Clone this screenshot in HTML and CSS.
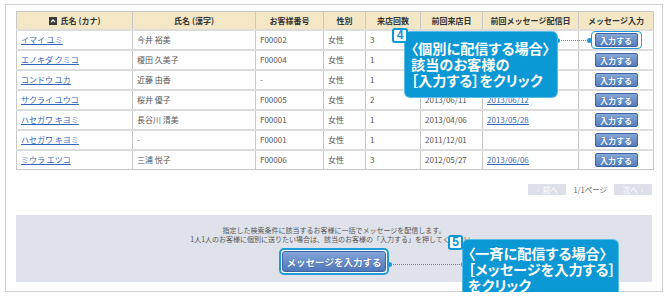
FILE: index.html
```html
<!DOCTYPE html>
<html lang="ja">
<head>
<meta charset="utf-8">
<link rel="stylesheet" href="styles.css">
</head>
<body>
<div class="frame">
  <table class="list">
    <colgroup>
      <col class="c1"><col class="c2"><col class="c3"><col class="c4"><col class="c5"><col class="c6"><col class="c7"><col class="c8">
    </colgroup>
    <thead>
      <tr>
        <th><svg class="sort" width="8" height="8" viewBox="0 0 8 8"><rect width="8" height="8" fill="#3a3a3a"/><path d="M2 5 L4 3 L6 5" fill="none" stroke="#fff" stroke-width="1.3"/></svg>氏名 (カナ)</th>
        <th>氏名 (漢字)</th>
        <th>お客様番号</th>
        <th>性別</th>
        <th>来店回数</th>
        <th>前回来店日</th>
        <th>前回メッセージ配信日</th>
        <th>メッセージ入力</th>
      </tr>
    </thead>
    <tbody>
      <tr><td><a href="#">イマイ ユミ</a></td><td>今井 裕美</td><td>F00002</td><td>女性</td><td>3</td><td></td><td></td><td class="act"><span class="btn hl">入力する</span></td></tr>
      <tr><td><a href="#">エノキダ クミコ</a></td><td>榎田 久美子</td><td>F00004</td><td>女性</td><td>1</td><td></td><td></td><td class="act"><span class="btn">入力する</span></td></tr>
      <tr><td><a href="#">コンドウ ユカ</a></td><td>近藤 由香</td><td>-</td><td>女性</td><td>1</td><td></td><td></td><td class="act"><span class="btn">入力する</span></td></tr>
      <tr><td><a href="#">サクライ ユウコ</a></td><td>桜井 優子</td><td>F00005</td><td>女性</td><td>2</td><td>2013/06/11</td><td><a href="#">2013/06/12</a></td><td class="act"><span class="btn">入力する</span></td></tr>
      <tr><td><a href="#">ハセガワ キヨミ</a></td><td>長谷川 清美</td><td>F00001</td><td>女性</td><td>1</td><td>2013/04/06</td><td><a href="#">2013/05/28</a></td><td class="act"><span class="btn">入力する</span></td></tr>
      <tr><td><a href="#">ハセガワ キヨミ</a></td><td>-</td><td>F00001</td><td>女性</td><td>1</td><td>2011/12/01</td><td></td><td class="act"><span class="btn">入力する</span></td></tr>
      <tr><td><a href="#">ミウラ エツコ</a></td><td>三浦 悦子</td><td>F00006</td><td>女性</td><td>3</td><td>2012/05/27</td><td><a href="#">2013/06/06</a></td><td class="act"><span class="btn">入力する</span></td></tr>
    </tbody>
  </table>

  <div class="pager">
    <span class="pg">‹&nbsp;&nbsp;前へ</span>
    <span class="pgtext">1/1ページ</span>
    <span class="pg">次へ&nbsp;&nbsp;›</span>
  </div>

  <div class="panel">
    <p class="note">指定した検索条件に該当するお客様に一括でメッセージを配信します。<br>1人1人のお客様に個別に送りたい場合は、該当のお客様の「入力する」を押してください。</p>
    <span class="bigwrap"><span class="bigbtn">メッセージを入力する</span></span>
  </div>

  <div class="line line4"></div>
  <div class="callout co4">〈個別に配信する場合〉<br>該当のお客様の<br>［入力する］をクリック</div>
  <div class="badge b4">4</div>

  <div class="line line5"></div>
  <div class="callout co5">〈一斉に配信する場合〉<br>［メッセージを入力する］<br>をクリック</div>
  <div class="badge b5">5</div>
</div>
</body>
</html>
```

FILE: styles.css
```css
* { box-sizing: border-box; }
html, body { margin: 0; padding: 0; background: #fff; }
body { font-family: "Noto Sans CJK JP", "Noto Sans", sans-serif; color: #555; }

.frame {
  position: relative;
  margin: 4px 0 0 5px;
  width: 658px;
  height: 288px;
  border: 1px solid #cfcfcf;
  padding: 6px 10px 4px 10px;
  display: flex;
  flex-direction: column;
}

.list {
  width: 637px;
  border-collapse: collapse;
  table-layout: fixed;
  font-size: 8px;
}
.c1 { width: 116px; } .c2 { width: 123px; } .c3 { width: 68px; } .c4 { width: 42px; }
.c5 { width: 55px; } .c6 { width: 62px; } .c7 { width: 96px; } .c8 { width: 75px; }

.list th, .list td {
  border: 1px solid #c8c8c8;
  padding: 0 4px;
  white-space: nowrap;
  overflow: hidden;
}
.list th {
  height: 18px;
  background: #f4e7c6;
  color: #333;
  font-weight: bold;
  text-align: center;
}
.list td {
  height: 20px;
  text-align: left;
  color: #555;
}
.list tbody tr { border-top: 2px solid #dcdcdc; }
.list a { color: #3467bb; text-decoration: underline; }
.sort { vertical-align: -1px; margin-right: 4px; }

.list td.act { text-align: center; overflow: visible; }
.btn {
  position: relative;
  display: inline-block;
  width: 43px;
  height: 14px;
  line-height: 13px;
  border: 1px solid #3f64a2;
  border-radius: 2px;
  background: linear-gradient(#86a7d8, #557cbc);
  color: #fff;
  font-weight: bold;
  font-size: 8px;
  text-align: center;
  vertical-align: middle;
  text-shadow: 0 0 1px #2b4a80;
}
.btn.hl::after {
  content: "";
  position: absolute;
  left: -5px; right: -5px; top: -3px; bottom: -3px;
  border: 1.5px solid #1e9bd7;
  border-radius: 4px;
}

.pager {
  margin-top: 14px;
  display: flex;
  justify-content: flex-end;
  align-items: center;
  gap: 7px;
  font-size: 7.5px;
  height: 11px;
}
.pg {
  background: #dde0e8;
  color: #fff;
  height: 11px;
  line-height: 11px;
  width: 38px;
  text-align: center;
}
.pgtext { color: #666; }

.panel {
  margin-top: 20px;
  height: 67px;
  background: #dfe2ea;
  display: flex;
  flex-direction: column;
  align-items: center;
  padding-top: 11px;
}
.note {
  margin: 0;
  font-size: 7px;
  line-height: 9px;
  color: #555;
  text-align: center;
}
.bigwrap {
  margin-top: 4px;
  display: inline-block;
  border: 2px solid #1e9bd7;
  border-radius: 5px;
  padding: 1px;
  background: #fff;
}
.bigbtn {
  display: block;
  width: 104px;
  height: 21px;
  line-height: 20px;
  border: 1px solid #3f64a2;
  border-radius: 3px;
  background: linear-gradient(#84a6d9, #4f77ba);
  color: #fff;
  font-weight: bold;
  font-size: 9.5px;
  text-align: center;
  text-shadow: 0 0 1px #2b4a80;
}

.callout {
  position: absolute;
  background: #0b98d5;
  color: #fff;
  font-weight: bold;
  font-size: 14.2px;
  line-height: 16px;
  border-radius: 5px;
  white-space: nowrap;
  font-feature-settings: "palt";
  box-shadow: 0 0 0 1px #5cbde8;
}
.co4 { left: 399px; top: 27px; width: 152px; height: 65px; padding: 8px 0 0 6px; }
.co5 { left: 457px; top: 235px; width: 155px; height: 60px; padding: 5px 0 0 5px; line-height: 16px; }

.badge {
  position: absolute;
  width: 16px;
  height: 15px;
  background: #fff;
  border: 2px solid #0b98d5;
  border-radius: 3px;
  color: #0b98d5;
  font-family: "Liberation Sans", Arial, sans-serif;
  font-weight: bold;
  font-size: 12px;
  line-height: 11px;
  text-align: center;
}
.b4 { left: 386px; top: 23px; }
.b5 { left: 442px; top: 230px; width: 15px; }

.line {
  position: absolute;
  height: 0;
  border-top: 1.5px dotted #1e9bd7;
}
.line::before, .line::after {
  content: "";
  position: absolute;
  top: -3px;
  width: 5px;
  height: 5px;
  border-radius: 50%;
  background: #1e9bd7;
}
.line::before { left: -2px; }
.line::after { right: -2px; }
.line4 { left: 551px; top: 35px; width: 33px; }
.line5 { left: 383px; top: 259px; width: 75px; }
```
